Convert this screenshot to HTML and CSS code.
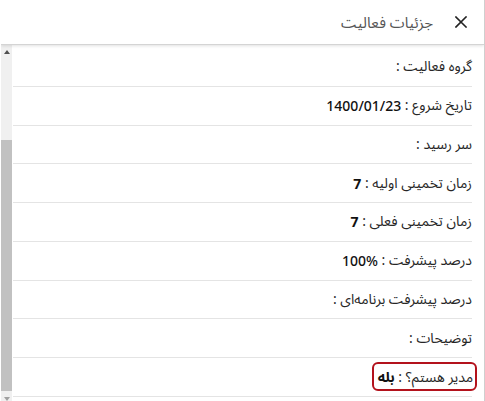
FILE: index.html
```html
<!DOCTYPE html>
<html lang="fa" dir="rtl">
<head>
<meta charset="utf-8">
<title>جزئیات فعالیت</title>
<link rel="stylesheet" href="styles.css">
</head>
<body>
<div class="panel">
  <header class="head">
    <button class="close" aria-label="بستن">
      <svg width="12" height="12" viewBox="0 0 12 12"><path d="M1 1L11 11M11 1L1 11" stroke="#222" stroke-width="1.6" fill="none" stroke-linecap="square"/></svg>
    </button>
    <h1 class="title">جزئیات فعالیت</h1>
  </header>
  <div class="body">
    <div class="content">
      <div class="row">گروه فعالیت :</div>
      <div class="row">تاریخ شروع : <span class="val2">1400/01/23</span></div>
      <div class="row">سر رسید :</div>
      <div class="row">زمان تخمینی اولیه : <b class="val">7</b></div>
      <div class="row">زمان تخمینی فعلی : <b class="val">7</b></div>
      <div class="row">درصد پیشرفت : <span class="val2">100%</span></div>
      <div class="row">درصد پیشرفت برنامه‌ای :</div>
      <div class="row">توضیحات :</div>
      <div class="row"><span class="mark">مدیر هستم؟ : <b class="val">بله</b></span></div>
    </div>
    <div class="scrollbar">
      <div class="sb-btn"><span class="tri-up"></span></div>
      <div class="sb-space"></div>
      <div class="sb-thumb"></div>
      <div class="sb-btn sb-down"><span class="tri-down"></span></div>
    </div>
  </div>
</div>
</body>
</html>
```
FILE: styles.css
```css
html, body {
  margin: 0;
  padding: 0;
  background: #fff;
  height: 100%;
  overflow: hidden;
}
body {
  font-family: "Noto Sans", "Noto Sans Arabic", "DejaVu Sans", sans-serif;
  color: #222;
}
.panel {
  width: 484px;
  height: 401px;
  border-right: 1px solid #cfcfcf;
  box-sizing: border-box;
  display: flex;
  flex-direction: column;
  overflow: hidden;
  direction: rtl;
}
.head {
  height: 44px;
  flex-shrink: 0;
  display: flex;
  align-items: center;
  padding-right: 17px;
  gap: 22px;
  border-bottom: 1px solid #d4d4d4;
  box-shadow: 0 1px 3px rgba(0,0,0,0.12);
  position: relative;
  z-index: 1;
}
.close {
  border: 0;
  background: none;
  padding: 0;
  width: 12px;
  height: 12px;
  display: flex;
  cursor: pointer;
}
.title {
  margin: 0;
  font-size: 15px;
  font-weight: 400;
  color: #555;
  line-height: 20px;
}
.body {
  flex: 1;
  display: flex;
  gap: 1px;
  overflow: hidden;
}
.content {
  flex: 1;
  padding-top: 3px;
  padding-right: 12px;
}
.row {
  height: 38.75px;
  box-sizing: border-box;
  border-bottom: 1px solid #e4e4e4;
  display: flex;
  align-items: center;
  font-size: 14px;
  color: #262626;
  white-space: pre;
}
.val {
  font-weight: 700;
  color: #111;
}
.val2 {
  font-weight: 500;
  color: #111;
}
.mark {
  border: 2px solid #b3121c;
  border-radius: 6px;
  padding: 3px 2px 3px 4px;
  margin-right: -5px;
  line-height: 19px;
}
.scrollbar {
  width: 11px;
  flex-shrink: 0;
  background: #f0f0f0;
  display: flex;
  flex-direction: column;
}
.sb-btn {
  height: 14px;
  flex-shrink: 0;
  display: flex;
  align-items: center;
  justify-content: center;
}
.sb-down {
  height: 15px;
}
.sb-space {
  height: 81px;
  flex-shrink: 0;
}
.sb-thumb {
  height: 251px;
  flex-shrink: 0;
  background: #c1c1c1;
}
.tri-up {
  width: 0;
  height: 0;
  border-left: 3.5px solid transparent;
  border-right: 3.5px solid transparent;
  border-bottom: 4px solid #505050;
}
.tri-down {
  width: 0;
  height: 0;
  border-left: 3.5px solid transparent;
  border-right: 3.5px solid transparent;
  border-top: 4px solid #a0a0a0;
}
```
